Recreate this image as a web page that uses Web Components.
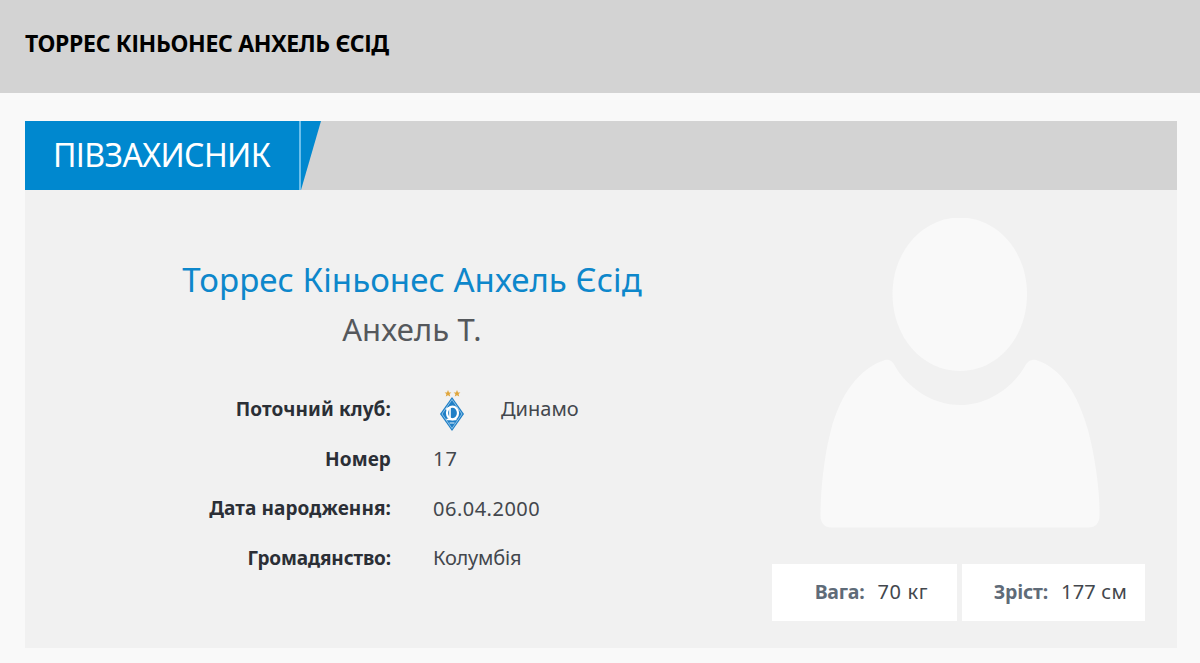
<!DOCTYPE html>
<html lang="uk">
<head>
<meta charset="utf-8">
<title>Торрес Кіньонес Анхель Єсід</title>
<style>
  html, body { margin: 0; padding: 0; }
  body { background: #f9f9f9; font-family: "Noto Sans", "Open Sans", sans-serif; }
</style>
</head>
<body>
<site-header>ТОРРЕС КІНЬОНЕС АНХЕЛЬ ЄСІД</site-header>
<player-card position="ПІВЗАХИСНИК" name="Торрес Кіньонес Анхель Єсід" short="Анхель Т.">
  <info-row label="Поточний клуб:"><club-logo></club-logo><span>Динамо</span></info-row>
  <info-row label="Номер"><span style="letter-spacing:1px">17</span></info-row>
  <info-row label="Дата народження:"><span style="letter-spacing:.5px">06.04.2000</span></info-row>
  <info-row label="Громадянство:" style="--label-spacing:-.13px"><span style="letter-spacing:-.2px">Колумбія</span></info-row>
  <stat-box slot="stats" label="Вага:" style="width:185px;padding-right:29px"><span style="letter-spacing:.6px">70 кг</span></stat-box>
  <stat-box slot="stats" label="Зріст:" style="width:183px"><span style="letter-spacing:.2px">177 см</span></stat-box>
</player-card>

<script>
// page title strip
class SiteHeader extends HTMLElement {
  constructor() {
    super();
    this.attachShadow({ mode: 'open' });
    this.shadowRoot.innerHTML = `
      <style>
        :host { display: flex; align-items: center; height: 93px; padding: 0 25px 8px; box-sizing: border-box;
                background: #d3d3d3; color: #000; font-size: 23px; font-weight: 700; letter-spacing: -0.320px; }
      </style>
      <slot></slot>`;
  }
}

class ClubLogo extends HTMLElement {
  constructor() {
    super();
    this.attachShadow({ mode: 'open' });
    this.shadowRoot.innerHTML = `
      <style>
        :host { display: block; width: 28px; height: 44px; margin: 4px 35px 0 5px; }
        svg { display: block; }
      </style>
      <svg width="28" height="44" viewBox="0 0 28 44">
        <g fill="#e0a63c">
          <polygon points="10,1 11,3.400 13.400,3.600 11.600,5.100 12.200,7.400 10,6.200 7.800,7.400 8.400,5.100 6.600,3.600 9,3.400"/>
          <polygon points="19,1 20,3.400 22.400,3.600 20.600,5.100 21.200,7.400 19,6.200 16.800,7.400 17.400,5.100 15.600,3.600 18,3.400"/>
        </g>
        <polygon points="14,8 26,25 14,42 2,25" fill="#1f7fc6"/>
        <polygon points="14,10.500 24,25 14,39.500 4,25" fill="none" stroke="#a9d3f0" stroke-width=".8"/>
        <ellipse cx="14.500" cy="24" rx="5.500" ry="6.300" fill="none" stroke="#fff" stroke-width="2.200"/>
        <path d="M8 20.500c1-1 2-1.500 3-1.800M12 19v10M8.500 30.500h10" fill="none" stroke="#fff" stroke-width="1.600"/>
        <path d="M11.500 34h5" stroke="#d5e9f7" stroke-width="1.100"/>
      </svg>`;
  }
}

class InfoRow extends HTMLElement {
  constructor() {
    super();
    this.attachShadow({ mode: 'open' });
    this.shadowRoot.innerHTML = `
      <style>
        :host { display: grid; grid-template-columns: 366px 1fr; column-gap: 42px; align-items: center; height: 49.700px; }
        .label { text-align: right; font-weight: 700; font-size: 19px; letter-spacing: var(--label-spacing, 0.100px); color: #2b2f36; }
        .value { display: flex; align-items: center; font-size: 20px; color: #43474d; }
      </style>
      <div class="label"></div>
      <div class="value"><slot></slot></div>`;
    this.shadowRoot.querySelector('.label').textContent = this.getAttribute('label');
  }
}

class StatBox extends HTMLElement {
  constructor() {
    super();
    this.attachShadow({ mode: 'open' });
    this.shadowRoot.innerHTML = `
      <style>
        :host { display: flex; justify-content: flex-end; align-items: center; gap: 13px; height: 57px;
                padding: 0 18px 2px 0; box-sizing: border-box; background: #fff; font-size: 20px; color: #43474d; }
        .label { font-weight: 700; font-size: 19.500px; letter-spacing: -0.200px; color: #5f6b78; }
      </style>
      <span class="label"></span><span><slot></slot></span>`;
    this.shadowRoot.querySelector('.label').textContent = this.getAttribute('label');
  }
}

class PlayerSilhouette extends HTMLElement {
  constructor() {
    super();
    this.attachShadow({ mode: 'open' });
    this.shadowRoot.innerHTML = `
      <style>
        :host { display: block; width: 280px; height: 311px; }
        svg { display: block; }
      </style>
      <svg width="280" height="311" viewBox="20 8 280 311" fill="#f9f9f9">
        <path d="M160 7.500C197 7.500 227 41 227 84C227 128 197 161 160 161C123 161 92.500 128 92.500 84C92.500 41 123 7.500 160 7.500Z"/>
        <path d="M85 150C90 149 93 152 95 156C107 177 132 195 160 195C188 195 213 177 225 156C227 152 231 149 236 150C262 158 278 185 288 220C296 250 300 285 299.500 306C299.500 313 295 317.500 289 317.500H31C25 317.500 20.500 313 20.500 306C20.500 285 23 250 31 220C40 185 59 158 85 150Z"/>
      </svg>`;
  }
}

class PlayerCard extends HTMLElement {
  constructor() {
    super();
    this.attachShadow({ mode: 'open' });
    this.shadowRoot.innerHTML = `
      <style>
        :host { display: block; margin: 28px 23px 0 25px; background: #f1f1f1; }
        .bar { display: flex; height: 69px; background: #d3d3d3; }
        .pos { width: 274px; padding: 0 0 2px 28px; box-sizing: border-box; display: flex; align-items: center;
               background: #0088cf; color: #fff; font-size: 32px; letter-spacing: -0.600px; }
        .line { width: 2px; background: #6cbfeb; }
        .tip { width: 20px; background: #0088cf; clip-path: polygon(0 100%, 0 0, 100% 0); }
        .body { display: flex; padding: 28px 32px 27px 0; height: 458px; box-sizing: border-box; }
        .info { width: 747px; padding-top: 39px; box-sizing: border-box; }
        h1, h2 { margin: 0; font-weight: 400; text-align: center; padding-left: 27px; }
        h1 { font-size: 33px; letter-spacing: 0.070px; line-height: 46px; color: #0d87cb; }
        h2 { font-size: 31px; letter-spacing: 0.150px; line-height: 50px; color: #55585c; margin-top: 1px; }
        .rows { margin-top: 30px; }
        .side { width: 373px; display: flex; flex-direction: column; align-items: center; }
        player-silhouette { margin-left: 3px; }
        .stats { display: flex; gap: 5px; margin-top: 35px; }
      </style>
      <div class="bar">
        <div class="pos"></div><div class="line"></div><div class="tip"></div>
      </div>
      <div class="body">
        <div class="info">
          <h1></h1>
          <h2></h2>
          <div class="rows"><slot></slot></div>
        </div>
        <div class="side">
          <player-silhouette></player-silhouette>
          <div class="stats"><slot name="stats"></slot></div>
        </div>
      </div>`;
    this.shadowRoot.querySelector('.pos').textContent = this.getAttribute('position');
    this.shadowRoot.querySelector('h1').textContent = this.getAttribute('name');
    this.shadowRoot.querySelector('h2').textContent = this.getAttribute('short');
  }
}

customElements.define('site-header', SiteHeader);
customElements.define('club-logo', ClubLogo);
customElements.define('info-row', InfoRow);
customElements.define('stat-box', StatBox);
customElements.define('player-silhouette', PlayerSilhouette);
customElements.define('player-card', PlayerCard);
</script>
</body>
</html>
